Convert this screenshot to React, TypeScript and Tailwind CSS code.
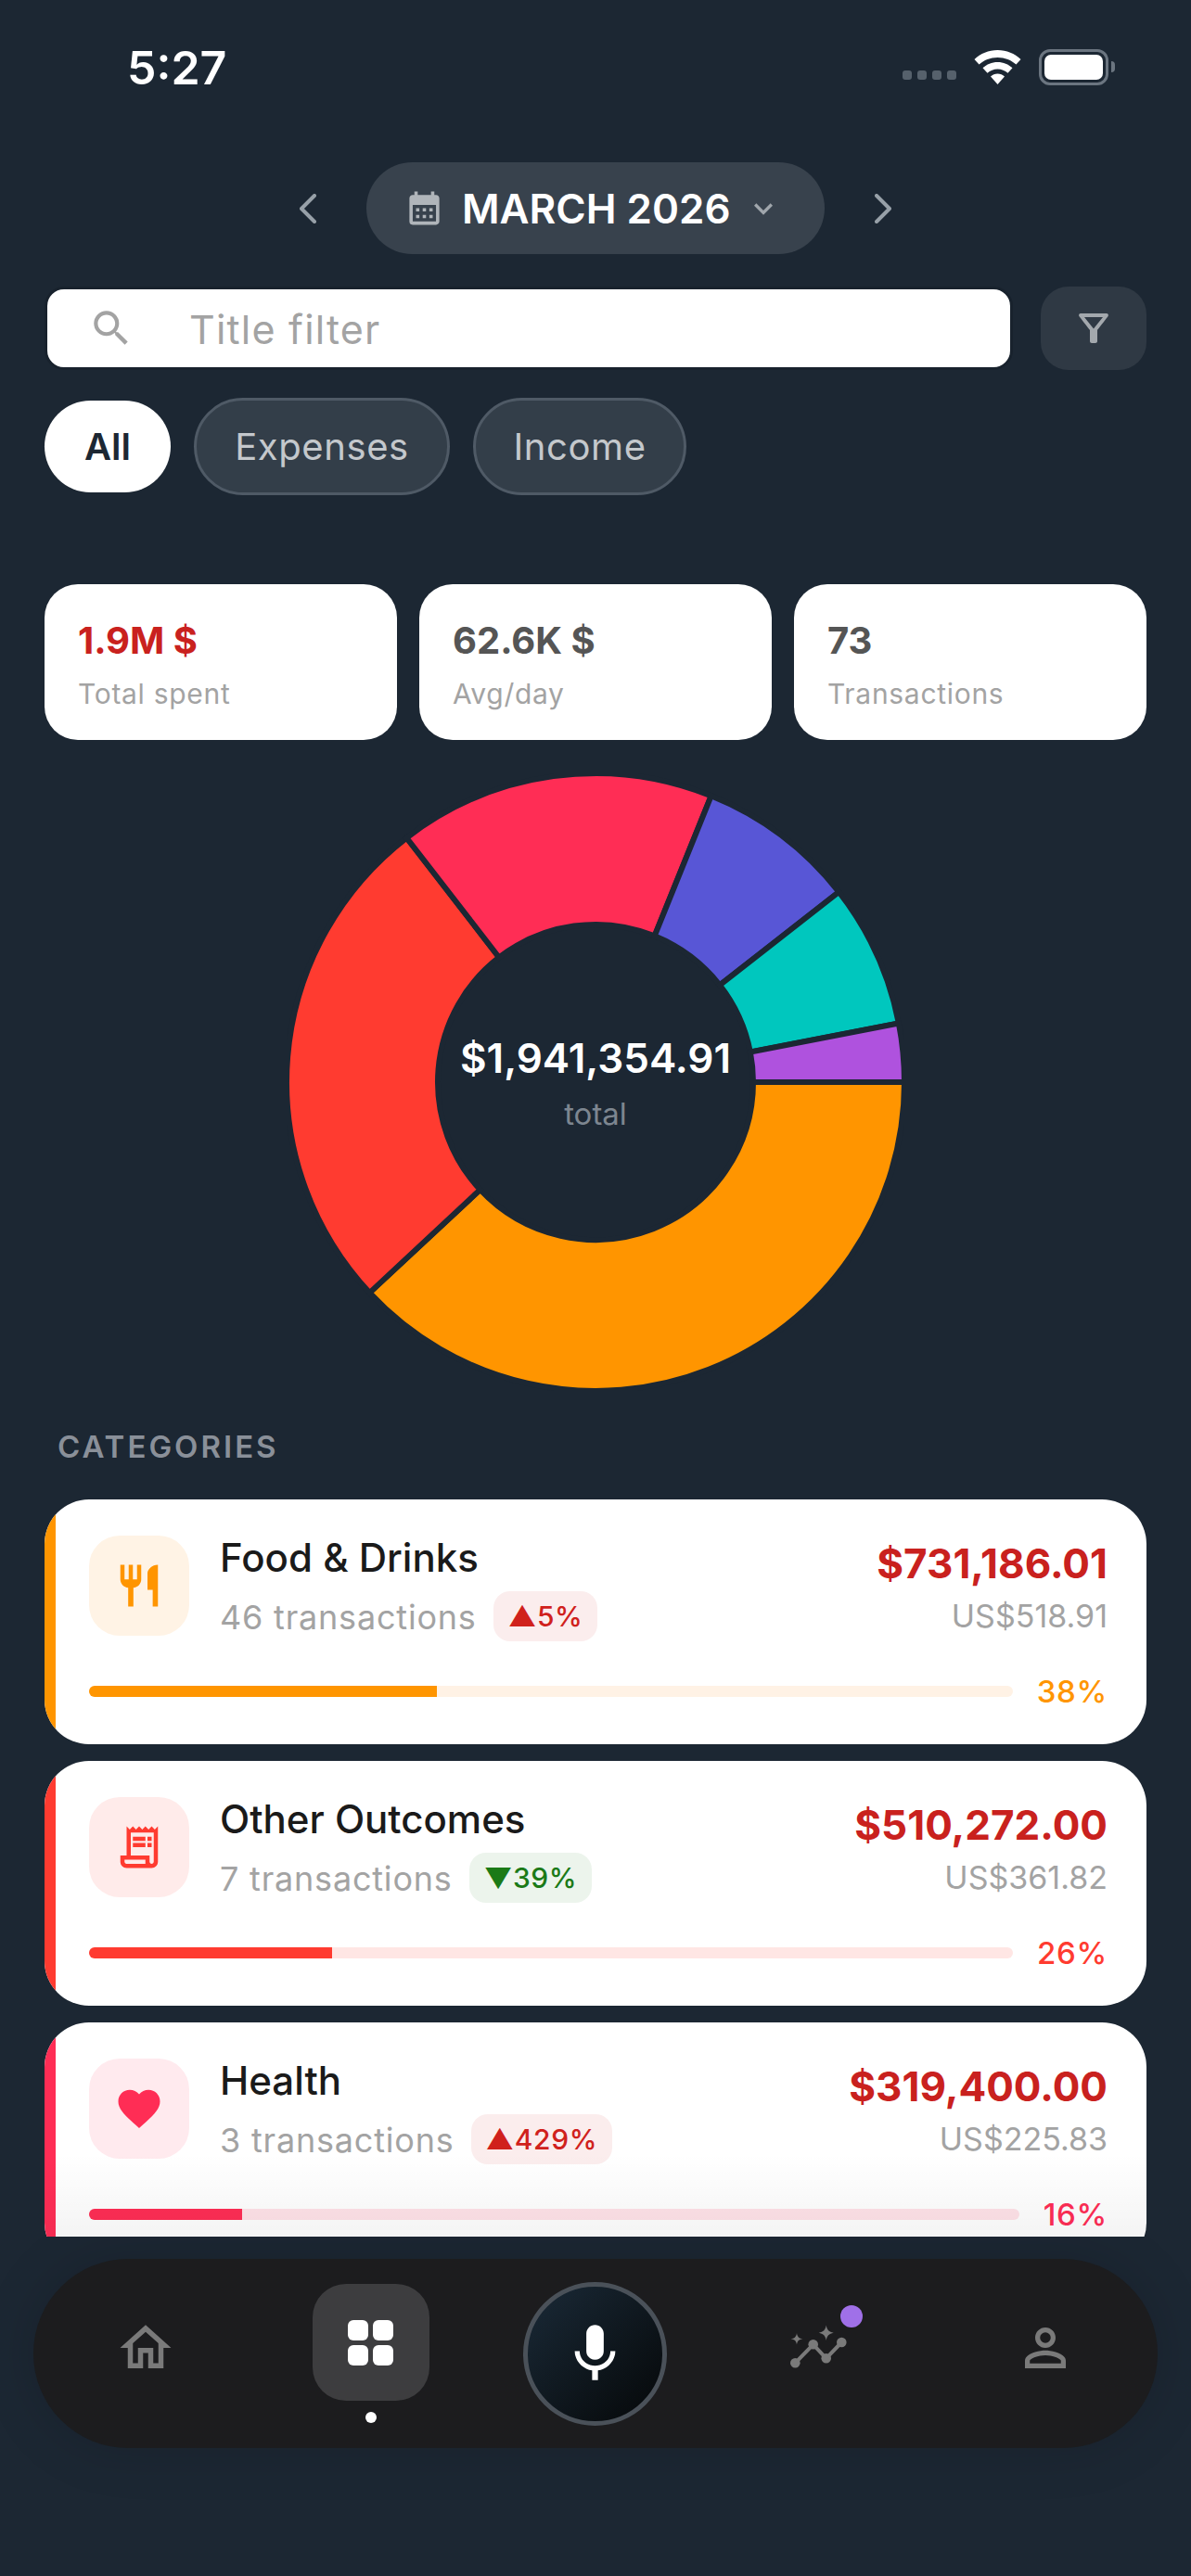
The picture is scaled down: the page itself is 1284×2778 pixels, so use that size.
import React from "react";
import {
  MdCalendarMonth,
  MdKeyboardArrowDown,
  MdSearch,
  MdOutlineFilterAlt,
  MdRestaurant,
  MdOutlineReceiptLong,
  MdFavorite,
  MdOutlineHome,
  MdMic,
  MdPersonOutline,
} from "react-icons/md";

const BG = "#1c2733";

function polar(r: number, deg: number) {
  const a = (deg * Math.PI) / 180;
  return [333 + r * Math.cos(a), 333 + r * Math.sin(a)];
}

function seg(a0: number, a1: number) {
  const R = 333;
  const r = 170;
  const [x0, y0] = polar(R, a0);
  const [x1, y1] = polar(R, a1);
  const [x2, y2] = polar(r, a1);
  const [x3, y3] = polar(r, a0);
  const large = a1 - a0 > 180 ? 1 : 0;
  return `M${x0} ${y0}A${R} ${R} 0 ${large} 1 ${x1} ${y1}L${x2} ${y2}A${r} ${r} 0 ${large} 0 ${x3} ${y3}Z`;
}

const slices = [
  { a: 0, b: 137, c: "#ff9500" },
  { a: 137, b: 232.3, c: "#ff3b30" },
  { a: 232.3, b: 292, c: "#ff2d55" },
  { a: 292, b: 322, c: "#5856d6" },
  { a: 322, b: 349, c: "#00c7be" },
  { a: 349, b: 360, c: "#af52de" },
];

function Donut() {
  return (
    <div className="relative mx-auto mt-[36px] h-[666px] w-[666px]">
      <svg width="666" height="666" viewBox="0 0 666 666">
        {slices.map((s) => (
          <path key={s.c} d={seg(s.a, s.b)} fill={s.c} stroke={BG} strokeWidth="6" />
        ))}
      </svg>
      <div className="absolute inset-0 flex flex-col items-center justify-center">
        <div className="mt-[1px] text-[44px] leading-[54px] font-semibold text-white">$1,941,354.91</div>
        <div className="mt-[12px] text-[33px] leading-[42px] text-[#7d8690]">total</div>
      </div>
    </div>
  );
}

function Stat({ value, label, color }: { value: string; label: string; color: string }) {
  return (
    <div className="h-[168px] flex-1 rounded-[36px] bg-white pt-[34px] pl-[36px]">
      <div className={`text-[40px] leading-[54px] font-bold ${color}`}>{value}</div>
      <div className="mt-[9px] text-[30px] leading-[42px] tracking-[0.7px] text-[#a3a3a3]">{label}</div>
    </div>
  );
}

type Cat = {
  title: string;
  count: string;
  badge: string;
  up: boolean;
  amount: string;
  usd: string;
  pct: string;
  fill: string;
  band: string;
  tint: string;
  track: string;
  text: string;
  icon: React.ReactNode;
};

function Card({ c }: { c: Cat }) {
  return (
    <div className="flex h-[264px] shrink-0 overflow-hidden rounded-[48px] bg-white">
      <div className={`w-[12px] shrink-0 ${c.band}`} />
      <div className="flex-1 pt-[39px] pr-[42px] pl-[36px]">
        <div className="flex h-[114px] items-start">
          <div className={`flex h-[108px] w-[108px] shrink-0 items-center justify-center rounded-[33px] ${c.tint}`}>
            {c.icon}
          </div>
          <div className="ml-[33px] flex-1">
            <div className="mt-[-3px] text-[42px] leading-[54px] font-medium text-[#1a1a1a]">{c.title}</div>
            <div className="mt-[9px] flex items-center">
              <span className="pt-[3px] text-[36px] leading-[51px] tracking-[0.8px] text-[#a3a3a3]">{c.count}</span>
              <span
                className={`ml-[18px] flex h-[54px] items-center rounded-[18px] px-[16px] text-[30px] font-medium tracking-[0.6px] ${
                  c.up ? "bg-[#fbeded] text-[#d0211c]" : "bg-[#ecf4ec] text-[#1b7a17]"
                }`}
              >
                {c.up ? "▲" : "▼"}
                {c.badge}
              </span>
            </div>
          </div>
          <div className="flex flex-col items-end">
            <div className="text-[44px] leading-[60px] font-bold text-[#c9211e]">{c.amount}</div>
            <div className="text-[34px] leading-[54px] text-[#a3a3a3]">{c.usd}</div>
          </div>
        </div>
        <div className="mt-[33px] flex h-[42px] items-center gap-[26px]">
          <div className={`h-[12px] flex-1 overflow-hidden rounded-full ${c.track}`}>
            <div className={`h-full ${c.band}`} style={{ width: c.fill }} />
          </div>
          <span className={`text-[33px] leading-[42px] font-medium tracking-[0.7px] ${c.text}`}>{c.pct}</span>
        </div>
      </div>
    </div>
  );
}

const cats: Cat[] = [
  {
    title: "Food & Drinks",
    count: "46 transactions",
    badge: "5%",
    up: true,
    amount: "$731,186.01",
    usd: "US$518.91",
    pct: "38%",
    fill: "37.66%",
    band: "bg-[#ff9500]",
    tint: "bg-[#fff3e5]",
    track: "bg-[#fff2e5]",
    text: "text-[#ff9500]",
    icon: <MdRestaurant size={54} color="#ff9500" />,
  },
  {
    title: "Other Outcomes",
    count: "7 transactions",
    badge: "39%",
    up: false,
    amount: "$510,272.00",
    usd: "US$361.82",
    pct: "26%",
    fill: "26.3%",
    band: "bg-[#ff3b30]",
    tint: "bg-[#ffebea]",
    track: "bg-[#ffe6e4]",
    text: "text-[#ff3b30]",
    icon: <MdOutlineReceiptLong size={54} color="#ff3b30" />,
  },
  {
    title: "Health",
    count: "3 transactions",
    badge: "429%",
    up: true,
    amount: "$319,400.00",
    usd: "US$225.83",
    pct: "16%",
    fill: "16.45%",
    band: "bg-[#ff2d55]",
    tint: "bg-[#ffeaee]",
    track: "bg-[#ffe2e8]",
    text: "text-[#ff2d55]",
    icon: <MdFavorite size={54} color="#ff2d55" />,
  },
];

function Chevron({ dir }: { dir: "l" | "r" }) {
  return (
    <svg width="18" height="32" viewBox="0 0 18 32" fill="none">
      <path
        d={dir === "l" ? "M16 2 2 16l14 14" : "M2 2l14 14L2 30"}
        stroke="#97a0a8"
        strokeWidth="4"
        strokeLinecap="round"
        strokeLinejoin="round"
      />
    </svg>
  );
}

function StatusBar() {
  return (
    <div className="flex h-[144px] items-center justify-between pr-[82px] pl-[137px]">
      <span className="mt-[2px] text-[50px] font-semibold text-white">5:27</span>
      <div className="flex items-center">
        <div className="mt-[18px] flex gap-[6px]">
          {[0, 1, 2, 3].map((i) => (
            <div key={i} className="h-[10px] w-[10px] rounded-[3px] bg-[#56616c]" />
          ))}
        </div>
        <svg className="ml-[19px]" width="51" height="37" viewBox="0 0 51 37">
          <path d="M25.5 0C15.8 0 7 3.800.5 10l5 5.600C10.700 10.800 17.700 8 25.500 8s14.800 2.800 20 7.600l5-5.600C44 3.800 35.200 0 25.500 0Z" fill="#fff" />
          <path d="M25.500 13c-6.200 0-11.800 2.400-16 6.300l5 5.500c2.900-2.700 6.800-4.300 11-4.300s8.100 1.600 11 4.300l5-5.500c-4.200-3.900-9.800-6.300-16-6.300Z" fill="#fff" />
          <path d="M25.500 25.500c-2.900 0-5.500 1.100-7.500 3L25.500 37 33 28.500c-2-1.900-4.600-3-7.500-3Z" fill="#fff" />
        </svg>
        <div className="ml-[19px] flex items-center">
          <div className="h-[39px] w-[75px] rounded-[12px] border-[3px] border-[#6b7580] p-[3px]">
            <div className="h-full w-full rounded-[7px] bg-white" />
          </div>
          <div className="ml-[3px] h-[12px] w-[4px] rounded-r-[4px] bg-[#6b7580]" />
        </div>
      </div>
    </div>
  );
}

function AnalyticsIcon() {
  return (
    <svg width="64" height="48" viewBox="74 67 64 48" fill="none">
      <path d="M79.300 108.300 98.700 88.300 112.700 103.300 129.300 86" stroke="#7a7a7a" strokeWidth="4" strokeLinejoin="round" />
      <circle cx="79.300" cy="108.300" r="5.300" fill="#7a7a7a" />
      <circle cx="98.700" cy="88.300" r="5.300" fill="#7a7a7a" />
      <circle cx="112.700" cy="103.300" r="5.300" fill="#7a7a7a" />
      <circle cx="129.300" cy="86" r="5.300" fill="#7a7a7a" />
      <path d="M112.700 67.500c.8 5 3 7.300 8 8.200-5 .9-7.200 3.200-8 8.200-.8-5-3-7.300-8-8.200 5-.9 7.200-3.200 8-8.200Z" fill="#7a7a7a" />
      <path d="M81 76c.5 4 2.300 5.800 6.500 6.300-4.200.5-6 2.300-6.500 6.300-.5-4-2.300-5.800-6.500-6.300 4.200-.5 6-2.300 6.500-6.300Z" fill="#7a7a7a" />
    </svg>
  );
}

function Nav() {
  return (
    <div className="mx-[36px] mt-[24px] grid h-[204px] grid-cols-5 items-center rounded-full bg-[#1c1c1e] shadow-[0_0_60px_rgba(0,0,0,0.15)]">
      <div className="flex justify-center">
        <MdOutlineHome size={66} color="#7a7a7a" className="mt-[-12px]" />
      </div>
      <div className="flex flex-col items-center">
        <div className="flex h-[126px] w-[126px] items-center justify-center rounded-[36px] bg-[#3d3d3f]">
          <div className="grid grid-cols-2 gap-[5px]">
            {[0, 1, 2, 3].map((i) => (
              <div key={i} className="h-[22px] w-[22px] rounded-[6px] bg-white" />
            ))}
          </div>
        </div>
        <div className="mt-[12px] h-[12px] w-[12px] rounded-full bg-white" />
      </div>
      <div className="flex justify-center">
        <div className="flex h-[155px] w-[155px] items-center justify-center rounded-full border-[5px] border-[#4a5159] bg-linear-to-br from-[#1a2a38] to-[#060809]">
          <MdMic size={75} color="#fff" />
        </div>
      </div>
      <div className="flex justify-center">
        <div className="relative mt-[-14px]">
          <AnalyticsIcon />
          <div className="absolute top-[-21px] right-[-14px] h-[24px] w-[24px] rounded-full bg-[#a070e8]" />
        </div>
      </div>
      <div className="flex justify-center">
        <MdPersonOutline size={66} color="#7a7a7a" className="mt-[-12px]" />
      </div>
    </div>
  );
}

export default function App() {
  return (
    <div className="h-[2778px] w-[1284px] overflow-hidden bg-[#1c2733] [font-family:Inter,sans-serif]">
      <div className="relative h-[2412px] overflow-hidden">
        <StatusBar />
        <div className="mt-[31px] flex h-[99px] items-center justify-center gap-[54px]">
          <Chevron dir="l" />
          <div className="flex h-[99px] w-[494px] items-center rounded-full bg-[#38424d] pl-[41px]">
            <MdCalendarMonth size={43} color="#b0b5ba" />
            <span className="ml-[19px] text-[44px] font-semibold text-white">MARCH 2026</span>
            <MdKeyboardArrowDown size={40} color="#a0a6ac" className="ml-[15px]" />
          </div>
          <Chevron dir="r" />
        </div>

        <div className="mx-[48px] mt-[35px] flex h-[90px] gap-[30px]">
          <div className="flex h-[90px] flex-1 items-center rounded-[21px] border-[3px] border-[#18222d] bg-white pl-[44px]">
            <MdSearch size={50} color="#a3a3a3" />
            <span className="mt-[2px] ml-[59px] text-[43px] tracking-[1.2px] text-[#a3a3a3]">Title filter</span>
          </div>
          <div className="flex h-[90px] w-[114px] items-center justify-center rounded-[30px] bg-[#2f3944]">
            <MdOutlineFilterAlt size={48} color="#a3a8ad" />
          </div>
        </div>

        <div className="mx-[48px] mt-[30px] flex h-[105px] items-center gap-[25px]">
          <div className="flex h-[99px] w-[136px] items-center justify-center rounded-full bg-white text-[40px] font-semibold text-[#1c2733]">
            All
          </div>
          <div className="flex h-[105px] w-[276px] items-center justify-center rounded-full border-[3px] border-[#4f5a66] bg-[#333e49] text-[40px] tracking-[0.6px] text-[#c4c8cc]">
            Expenses
          </div>
          <div className="flex h-[105px] w-[230px] items-center justify-center rounded-full border-[3px] border-[#4f5a66] bg-[#333e49] text-[40px] tracking-[0.6px] text-[#c4c8cc]">
            Income
          </div>
        </div>

        <div className="mx-[48px] mt-[96px] flex gap-[24px]">
          <Stat value="1.9M $" label="Total spent" color="text-[#c9211e]" />
          <Stat value="62.6K $" label="Avg/day" color="text-[#555555]" />
          <Stat value="73" label="Transactions" color="text-[#555555]" />
        </div>

        <Donut />

        <div className="mt-[42px] ml-[62px] text-[33px] leading-[36px] font-semibold tracking-[3px] text-[#8a9099]">CATEGORIES</div>

        <div className="mx-[48px] mt-[39px] flex flex-col gap-[18px]">
          {cats.map((c) => (
            <Card key={c.title} c={c} />
          ))}
        </div>
        <div className="absolute right-[48px] bottom-0 left-[48px] h-[90px] bg-linear-to-b from-transparent to-[rgba(0,0,0,0.045)]" />
      </div>
      <Nav />
    </div>
  );
}
